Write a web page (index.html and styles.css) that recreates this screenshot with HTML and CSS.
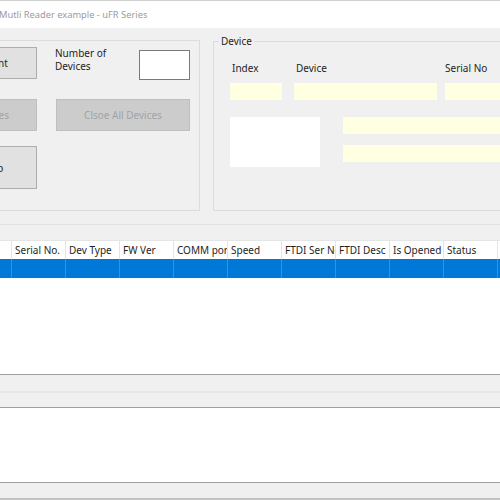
FILE: index.html
```html
<!DOCTYPE html>
<html>
<head>
<meta charset="utf-8">
<link rel="stylesheet" href="styles.css">
</head>
<body>
<div class="window">
  <div class="titlebar"><span class="title">Mutli Reader example - uFR Series</span></div>
  <div class="client">
    <div class="top">
      <div class="group left-group">
        <div class="controls">
          <button class="btn">Device Count</button>
          <div class="count">
            <span class="lbl">Number of<br>Devices</span>
            <span class="textbox"></span>
          </div>
          <button class="btn dis row2">Open Devices</button>
          <button class="btn dis row2 close">Clsoe All Devices</button>
          <button class="btn row3 tall">Device Info</button>
        </div>
      </div>
      <fieldset class="device">
        <legend>Device</legend>
        <div class="dev-inner">
          <div class="dev-labels">
            <span class="c-index">Index</span>
            <span class="c-device">Device</span>
            <span class="c-serial">Serial No</span>
          </div>
          <div class="dev-fields">
            <span class="yfield c-index"></span>
            <span class="yfield c-device"></span>
            <span class="yfield c-serial"></span>
          </div>
          <div class="dev-lower">
            <span class="picture"></span>
            <div class="long-fields">
              <span class="yfield long"></span>
              <span class="yfield long"></span>
            </div>
          </div>
        </div>
      </fieldset>
    </div>
    <div class="splitter"></div>
    <div class="list">
      <div class="lv-row lv-header">
        <span class="col first"></span>
        <span class="col">Serial No.</span>
        <span class="col">Dev Type</span>
        <span class="col">FW Ver</span>
        <span class="col">COMM port</span>
        <span class="col">Speed</span>
        <span class="col">FTDI Ser No</span>
        <span class="col">FTDI Desc</span>
        <span class="col">Is Opened</span>
        <span class="col">Status</span>
      </div>
      <div class="lv-row lv-selected">
        <span class="col first"></span>
        <span class="col"></span>
        <span class="col"></span>
        <span class="col"></span>
        <span class="col"></span>
        <span class="col"></span>
        <span class="col"></span>
        <span class="col"></span>
        <span class="col"></span>
        <span class="col"></span>
      </div>
    </div>
    <div class="hscroll"><div class="hscroll-inner"></div></div>
    <div class="log"></div>
    <div class="statusbar"></div>
    <div class="bottom-edge"></div>
  </div>
</div>
</body>
</html>
```

FILE: styles.css
```css
* { box-sizing: border-box; }
html, body {
  margin: 0;
  padding: 0;
  width: 500px;
  height: 500px;
  overflow: hidden;
  background: #f0f0f0;
  font-family: "Noto Sans", "Open Sans", sans-serif;
  font-size: 10px;
  color: #1e1e1e;
}
.window {
  margin-left: -100px;
  width: 640px;
}
.titlebar {
  height: 28px;
  background: #ffffff;
  border-top: 1px solid #cfcfcf;
  padding-left: 99px;
  display: flex;
  align-items: center;
}
.title {
  color: #9b9b9b;
  font-size: 9.3px;
}
.client {
  display: flex;
  flex-direction: column;
}
.top {
  display: flex;
  align-items: flex-start;
  margin-top: 6px;
}
.group {
  border: 1px solid #dcdcdc;
}
.left-group {
  flex: none;
  margin-top: 6px;
  margin-left: 8px;
  width: 292px;
  height: 171px;
  padding: 6px 0 0 8px;
}
.controls {
  display: grid;
  grid-template-columns: 120px 135px;
  column-gap: 18px;
}
.btn {
  font-family: inherit;
  font-size: 10px;
  color: #1e1e1e;
  background: #e1e1e1;
  border: 1px solid #adadad;
  height: 32px;
  padding: 0;
  white-space: nowrap;
  overflow: hidden;
}
.btn.dis {
  background: #cccccc;
  border-color: #bfbfbf;
  color: #a3a3a3;
}
.row2 { margin-top: 19px; }
.row3 { margin-top: 15px; }
.tall { height: 43px; }
.close { margin-left: 1px; width: 134px; }
.count {
  display: flex;
  justify-content: space-between;
  align-items: flex-start;
}
.lbl {
  line-height: 13px;
}
.textbox {
  flex: none;
  margin-top: 3px;
  width: 51px;
  height: 30px;
  background: #ffffff;
  border: 1px solid #7a7a7a;
}
.device {
  margin: 0 0 0 13px;
  padding: 0 0 0 6px;
  border: 1px solid #dcdcdc;
  height: 177px;
  flex: 1;
  min-width: 0;
}
.device legend {
  padding: 0 2px;
  margin-left: -1px;
  line-height: 14px;
  color: #1e1e1e;
}
.dev-inner {
  padding-left: 10px;
}
.dev-labels {
  display: flex;
  margin-top: 13px;
  line-height: 14px;
}
.dev-fields {
  display: flex;
  margin-top: 8px;
}
.dev-labels > span, .dev-fields > span { flex: none; }
.c-index { width: 52px; }
.c-device { width: 143px; margin-left: 12px; }
.c-serial { width: 100px; margin-left: 8px; }
.dev-labels .c-index, .dev-labels .c-device { padding-left: 2px; }
.yfield {
  display: block;
  height: 17px;
  background: #ffffe1;
}
.dev-lower {
  display: flex;
  margin-top: 17px;
}
.picture {
  flex: none;
  width: 90px;
  height: 50px;
  background: #ffffff;
}
.long-fields {
  flex: none;
  margin-left: 23px;
  display: flex;
  flex-direction: column;
  gap: 11px;
  width: 200px;
}
.yfield.long { width: 200px; }
.splitter {
  margin-top: 13px;
  height: 1px;
  background: #e3e3e3;
}
.list {
  margin-top: 15px;
  margin-left: 8px;
  height: 134px;
  background: #ffffff;
  border-top: 1px solid #e5e5e5;
}
.lv-row {
  display: flex;
  height: 18px;
}
.lv-header {
  background: #ffffff;
}
.col {
  flex: none;
  width: 54px;
  border-right: 1px solid #e5e5e5;
  padding-left: 3px;
  white-space: nowrap;
  overflow: hidden;
  line-height: 18px;
}
.col.first { width: 104px; }
.lv-selected {
  height: 19px;
  background: #0078d7;
}
.lv-selected .col {
  border-right-color: #3393e0;
}
.hscroll {
  height: 34px;
  border-top: 1px solid #a0a0a0;
  border-bottom: 1px solid #a0a0a0;
  background: #f0f0f0;
  padding-top: 16px;
}
.hscroll-inner {
  height: 2px;
  background: #e6e6e6;
}
.log {
  height: 75px;
  background: #ffffff;
  border-bottom: 1px solid #a0a0a0;
}
.statusbar {
  height: 15px;
  background: #f0f0f0;
}
.bottom-edge {
  height: 4px;
  background: #c3c3c3;
}
```
